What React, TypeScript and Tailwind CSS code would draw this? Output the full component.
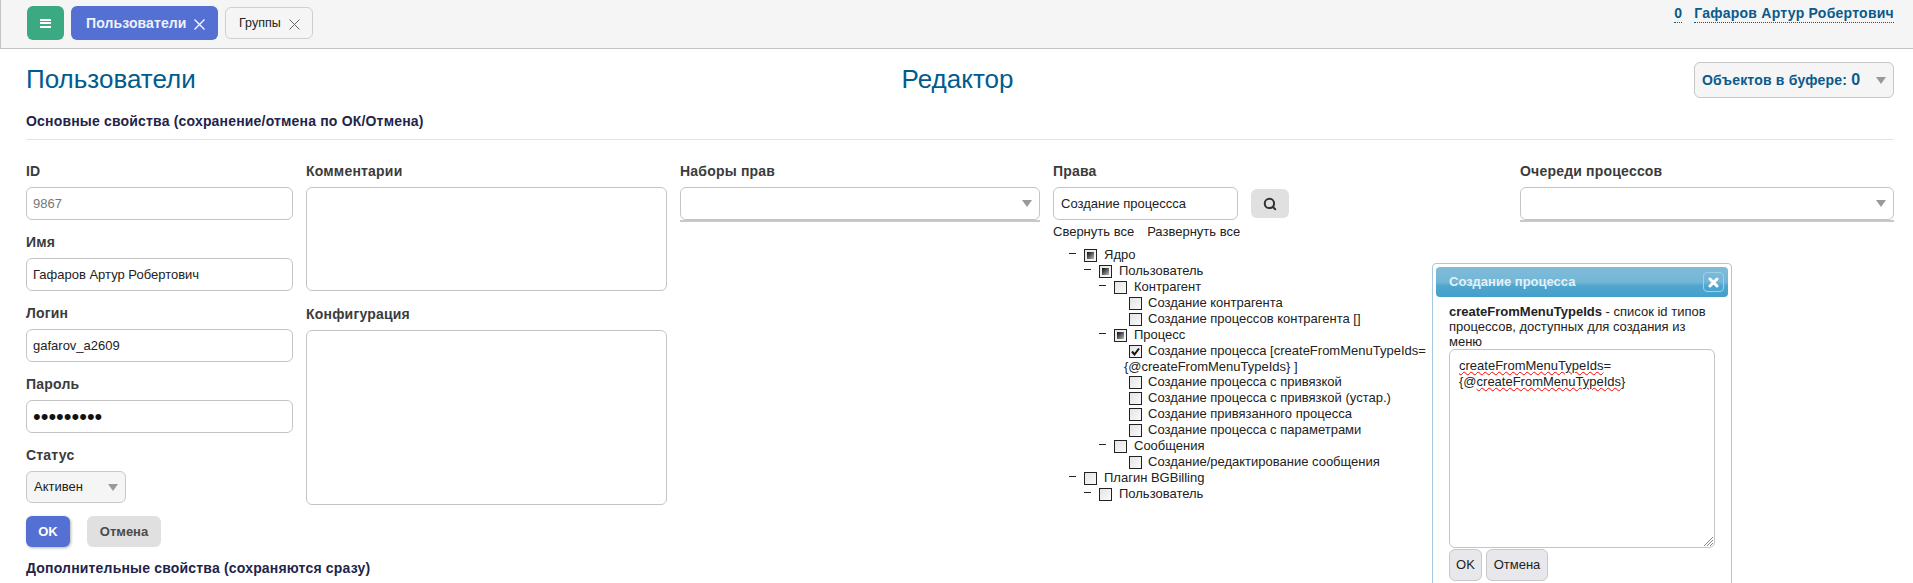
import { Search } from 'lucide-react'

const font = { fontFamily: '"Liberation Sans", Arial, sans-serif' }

function Label({ children }: { children: React.ReactNode }) {
  return <div className="h-[17px] text-[14px] leading-[17px] font-bold tracking-[0.2px] text-[#3b3b3b]">{children}</div>
}

function TextInput({ value, muted = false }: { value: string; muted?: boolean }) {
  return (
    <input
      readOnly
      value={value}
      className={`mt-[7px] block h-[33px] w-full rounded-[6px] border border-[#c4c4c4] bg-white px-[6px] text-[13px] outline-none ${muted ? 'text-[#777]' : 'text-[#222]'}`}
    />
  )
}

function Arrow() {
  return <span className="h-0 w-0 border-x-[5px] border-t-[7px] border-x-transparent border-t-[#999]" />
}

function Cross({ color, width }: { color: string; width: number }) {
  return (
    <svg className="mt-[3px] ml-[8px]" width="11" height="11" viewBox="0 0 11 11">
      <path d="M0.5 0.5 L10.5 10.5 M10.5 0.5 L0.5 10.5" fill="none" stroke={color} strokeWidth={width} />
    </svg>
  )
}

function MultiSelect() {
  return (
    <div className="mt-[7px] border-b-2 border-[#c8c8c8]">
      <div className="flex h-[33px] items-center justify-end rounded-[6px] border border-[#c4c4c4] bg-white pr-[7px]">
        <Arrow />
      </div>
    </div>
  )
}

function Check({ state, gap }: { state: 'none' | 'partial' | 'checked'; gap: string }) {
  return (
    <span className={`mt-[2px] inline-flex h-[13px] w-[13px] items-center justify-center border border-[#222] bg-gradient-to-br from-[#e4e4e4] to-[#fafafa] align-top ${gap}`}>
      {state === 'partial' && <span className="h-[7px] w-[7px] bg-gradient-to-br from-[#111] to-[#bbb]" />}
      {state === 'checked' && (
        <svg width="11" height="11" viewBox="0 0 11 11">
          <path d="M2 5.5 L4.5 8.5 L9 2.5" fill="none" stroke="#111" strokeWidth="2" />
        </svg>
      )}
    </span>
  )
}

const tree: { level: number; text: string; state: 'none' | 'partial' | 'checked'; dash: boolean }[] = [
  { level: 0, text: 'Ядро', state: 'partial', dash: true },
  { level: 1, text: 'Пользователь', state: 'partial', dash: true },
  { level: 2, text: 'Контрагент', state: 'none', dash: true },
  { level: 3, text: 'Создание контрагента', state: 'none', dash: false },
  { level: 3, text: 'Создание процессов контрагента []', state: 'none', dash: false },
  { level: 2, text: 'Процесс', state: 'partial', dash: true },
  { level: 3, text: 'Создание процесса [createFromMenuTypeIds= {@createFromMenuTypeIds} ]', state: 'checked', dash: false },
  { level: 3, text: 'Создание процесса с привязкой', state: 'none', dash: false },
  { level: 3, text: 'Создание процесса с привязкой (устар.)', state: 'none', dash: false },
  { level: 3, text: 'Создание привязанного процесса', state: 'none', dash: false },
  { level: 3, text: 'Создание процесса с параметрами', state: 'none', dash: false },
  { level: 2, text: 'Сообщения', state: 'none', dash: true },
  { level: 3, text: 'Создание/редактирование сообщения', state: 'none', dash: false },
  { level: 0, text: 'Плагин BGBilling', state: 'none', dash: true },
  { level: 1, text: 'Пользователь', state: 'none', dash: true },
]

function TreeRow({ level, text, state, dash }: (typeof tree)[number]) {
  // the third level has no dash, and its wrapped line starts 5px left of the checkbox
  const left = ['pl-[16px]', 'pl-[31px]', 'pl-[46px]', 'pl-[71px] indent-[5px]'][level]
  const wraps = text.length > 50
  return (
    <div className={`w-[375px] text-[13px] leading-[16px] text-[#222] ${left} ${wraps ? '-mb-px' : ''}`}>
      {dash && <span className="mr-[8px] inline-block h-[1px] w-[7px] bg-[#222] align-[5px]" />}
      <Check state={state} gap={dash ? 'mr-[7px]' : 'mr-[6px]'} />
      {text}
    </div>
  )
}

function Popup() {
  return (
    <div className="absolute top-[263px] left-[1432px] h-[330px] w-[300px] rounded-[4px] border border-[#a6c9e2] bg-white px-[3px] pt-[3px]">
      <div className="flex h-[30px] items-center justify-between rounded-[4px] bg-[linear-gradient(to_bottom,#7fbcd9_0%,#74b6d6_50%,#50a6cf_62%,#42a0cb_100%)] pr-1 pl-[13px] text-[13px] font-bold text-[#e4f1f7]">
        Создание процесса
        <span className="flex h-[20px] w-[21px] items-center justify-center rounded-[4px] border border-[#9bd0ea]">
          <svg width="11" height="11" viewBox="0 0 11 11">
            <path d="M2 2 L9 9 M9 2 L2 9" fill="none" stroke="#fff" strokeWidth="3" strokeLinecap="round" />
          </svg>
        </span>
      </div>
      <div className="mt-[7px] w-[272px] pl-[13px] text-[13px] leading-[15px] text-[#222]">
        <b>createFromMenuTypeIds</b> - список id типов процессов, доступных для создания из меню
      </div>
      <div className="relative ml-[13px] h-[199px] w-[266px] rounded-[6px] border border-[#c4c4c4] bg-white py-[8px] pr-[8px] pl-[9px] text-[13px] leading-[16px] text-[#222]">
        <span className="underline decoration-[#ff0000] decoration-wavy decoration-1">createFromMenuTypeIds</span>=
        <br />
        {'{@'}
        <span className="underline decoration-[#ff0000] decoration-wavy decoration-1">createFromMenuTypeIds</span>
        {'}'}
        <svg className="absolute right-0 bottom-0" width="11" height="11" viewBox="0 0 11 11">
          <path d="M1 10 L10 1 M4 10 L10 4 M7 10 L10 7" stroke="#888" strokeWidth="1" />
        </svg>
      </div>
      <div className="mt-[1px] ml-[13px] flex gap-1">
        <button className="h-[32px] w-[33px] rounded-[6px] border border-[#c8c8c8] bg-[#e8e8ec] text-[13px] text-[#222]">OK</button>
        <button className="h-[32px] w-[62px] rounded-[6px] border border-[#c8c8c8] bg-[#e8e8ec] text-[13px] text-[#222]">Отмена</button>
      </div>
    </div>
  )
}

export default function App() {
  return (
    <div className="relative h-[583px] overflow-hidden bg-white" style={font}>
      <header className="flex h-[49px] items-start justify-between border-b border-l border-[#c4c4c4] bg-[#f5f5f5] pr-[19px] pl-[26px]">
        <div className="flex items-center gap-[7px] pt-[6px]">
          <button className="flex h-[34px] w-[37px] items-center justify-center rounded-[6px] bg-[#3ba981]">
            <span className="flex flex-col gap-[1.5px]">
              <span className="h-[2px] w-[11px] bg-white" />
              <span className="h-[2px] w-[11px] bg-white" />
              <span className="h-[2px] w-[11px] bg-white" />
            </span>
          </button>
          <div className="flex h-[34px] w-[147px] items-center rounded-[6px] bg-[#5470d3] pl-[15px] text-[14px] font-bold tracking-[0.1px] text-[#eef1fb]">
            Пользователи
            <Cross color="#ffffff" width={1.2} />
          </div>
          <div className="flex h-[32px] w-[88px] items-center rounded-[6px] border border-[#cfcfcf] bg-[#f5f5f5] pl-[13px] text-[12.5px] text-[#222]">
            Группы
            <Cross color="#666666" width={1} />
          </div>
        </div>
        <div className="flex gap-3 pt-[5px] text-[14px] leading-[16px] font-bold tracking-[0.25px] text-[#0a5a8c]">
          <span className="border-b border-dotted border-[#0a5a8c] pb-[1px]">0</span>
          <span className="border-b border-dotted border-[#0a5a8c] pb-[1px]">Гафаров Артур Робертович</span>
        </div>
      </header>

      <main className="pr-[19px] pl-[26px]">
        <div className="grid h-[50px] grid-cols-3 items-start pt-[13px]">
          <h1 className="pt-[2px] text-[26px] leading-[30px] text-[#005c8f]">Пользователи</h1>
          <h1 className="pt-[2px] pr-[5px] text-center text-[26px] leading-[30px] text-[#005c8f]">Редактор</h1>
          <div className="flex h-[36px] w-[200px] items-center justify-between justify-self-end rounded-[6px] border border-[#c8c8c8] bg-[#f5f5f5] pr-[7px] pl-[7px] text-[14px] font-bold tracking-[0.2px] text-[#0a5a8c]">
            <span>
              Объектов в буфере: <span className="text-[16px]">0</span>
            </span>
            <Arrow />
          </div>
        </div>
        <div className="mt-[14px] border-b border-[#e2e2e2] pb-[9px] text-[14px] leading-[17px] font-bold tracking-[0.18px] text-[#22244a]">
          Основные свойства (сохранение/отмена по ОК/Отмена)
        </div>

        <div className="mt-[23px] flex gap-[13px]">
          <div className="w-[267px]">
            <Label>ID</Label>
            <TextInput value="9867" muted />
            <div className="mt-[14px]"><Label>Имя</Label></div>
            <TextInput value="Гафаров Артур Робертович" />
            <div className="mt-[14px]"><Label>Логин</Label></div>
            <TextInput value="gafarov_a2609" />
            <div className="mt-[14px]"><Label>Пароль</Label></div>
            <input
              readOnly
              type="password"
              value="123456789"
              className="mt-[7px] block h-[33px] w-full rounded-[6px] border border-[#c4c4c4] bg-white px-[6px] text-[22px] text-[#111] outline-none"
            />
            <div className="mt-[14px]"><Label>Статус</Label></div>
            <div className="mt-[7px] flex h-[32px] w-[100px] items-center justify-between rounded-[6px] border border-[#c8c8c8] bg-[#f5f5f5] pr-[7px] pl-[7px] text-[13px] text-[#222]">
              Активен
              <Arrow />
            </div>
            <div className="mt-[13px] flex gap-[17px]">
              <button className="h-[31px] w-[44px] rounded-[6px] bg-[#5470d3] text-[13px] font-bold text-white shadow-[1px_1px_3px_rgba(0,0,0,0.3)]">OK</button>
              <button className="h-[31px] w-[74px] rounded-[6px] bg-[#e0e0e0] text-[13px] font-bold text-[#4a4a4a]">Отмена</button>
            </div>
          </div>

          <div className="w-[361px]">
            <Label>Комментарии</Label>
            <div className="mt-[7px] h-[104px] rounded-[6px] border border-[#c4c4c4]" />
            <div className="mt-[15px]"><Label>Конфигурация</Label></div>
            <div className="mt-[7px] h-[175px] rounded-[6px] border border-[#c4c4c4]" />
          </div>

          <div className="w-[360px]">
            <Label>Наборы прав</Label>
            <MultiSelect />
          </div>

          <div className="w-[454px]">
            <Label>Права</Label>
            <div className="flex items-center gap-[13px]">
              <input
                readOnly
                value="Создание процессса"
                className="mt-[7px] block h-[33px] w-[185px] rounded-[6px] border border-[#c4c4c4] bg-white px-[7px] text-[13px] text-[#222] outline-none"
              />
              <button className="mt-[7px] flex h-[29px] w-[38px] items-center justify-center rounded-[6px] bg-[#e0e0e0]">
                <Search size={14} strokeWidth={3.5} className="text-[#333]" />
              </button>
            </div>
            <div className="mt-[4px] flex gap-[13px] text-[13px] leading-[16px] text-[#222]">
              <span>Свернуть все</span>
              <span>Развернуть все</span>
            </div>
            <div className="mt-[7px]">
              {tree.map((row, i) => (
                <TreeRow key={i} {...row} />
              ))}
            </div>
          </div>

          <div className="w-[374px]">
            <Label>Очереди процессов</Label>
            <MultiSelect />
          </div>
        </div>

        <div className="mt-[13px] text-[14px] leading-[17px] font-bold tracking-[0.18px] text-[#22244a]">
          Дополнительные свойства (сохраняются сразу)
        </div>
      </main>

      <Popup />
    </div>
  )
}
